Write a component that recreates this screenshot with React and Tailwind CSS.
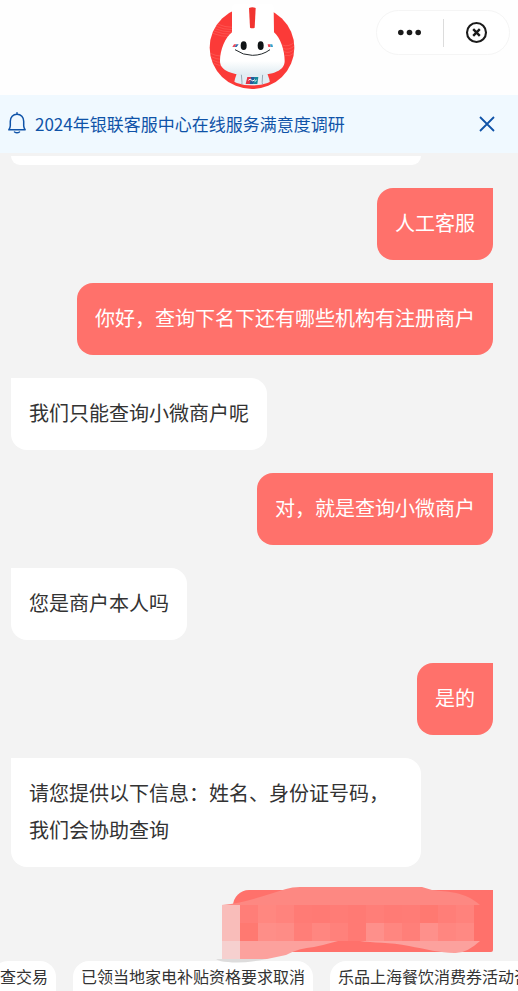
import React from "react";

const messages = [
    { id: 1, from: "user", text: "人工客服" },
    { id: 2, from: "user", text: "你好，查询下名下还有哪些机构有注册商户" },
    { id: 3, from: "agent", text: "我们只能查询小微商户呢" },
    { id: 4, from: "user", text: "对，就是查询小微商户" },
    { id: 5, from: "agent", text: "您是商户本人吗" },
    { id: 6, from: "user", text: "是的" },
    {
        id: 7,
        from: "agent",
        text: "请您提供以下信息：姓名、身份证号码，我们会协助查询",
    },
];

const quickReplies = [
    "查交易",
    "已领当地家电补贴资格要求取消",
    "乐品上海餐饮消费券活动咨询",
];

/* Colours of the mosaic blocks, left to right, 18px each */
const mosaicRows = [
    ["#f9bdba", "#ff7e78", "#ff8780", "#ff837d", "#ff7b75", "#ff7a74", "#ff7c76", "#ff7a74", "#ff7e78", "#ff7b75", "#ff7c76", "#ff7971", "#ff7e78", "#ff827c"],
    ["#f9bdba", "#ff7971", "#fe8e88", "#fe8c86", "#ff7e78", "#ff8680", "#ff817b", "#ff7a74", "#fe908b", "#ff8680", "#ff7f79", "#fe908b", "#ff8680", "#ff8983"],
];

function Mascot() {
    return (
        <svg
            className="h-[95px] w-[110px]"
            viewBox="0 0 330 285"
            role="img"
            aria-label="智能客服"
        >
            <defs>
                <linearGradient id="head" x1="0" y1="0" x2="0" y2="1">
                    <stop offset="0.8" stopColor="#ffffff" />
                    <stop offset="1" stopColor="#dfebf1" />
                </linearGradient>
                <clipPath id="disc">
                    <path d="M0 0H330V150H283A127 117 0 0 1 30 150H0Z" />
                </clipPath>
            </defs>
            <ellipse cx="156" cy="143" rx="127" ry="124" fill="#fb3a38" />
            <g fill="none" stroke="#ff8580" strokeWidth="1">
                <path d="M52 72Q75 82 98 82M48 79Q72 89 98 89M44 86Q70 96 98 96M41 93Q68 103 96 103M38 100Q64 110 90 110" />
                <path d="M31 160Q48 168 62 168M33 170Q50 178 65 178M36 180Q52 188 70 188M40 190Q58 198 78 198" />
                <path d="M246 135Q265 142 282 128M249 145Q266 152 283 138M252 155Q268 162 283 148M254 166Q270 171 282 159" />
            </g>
            <g clipPath="url(#disc)">
                <path
                    d="M112 215Q102 240 99 270H213Q211 240 200 215Z"
                    fill="#e2edf3"
                />
                <path
                    d="M124 222Q128 248 124 270M188 222Q184 248 190 270"
                    fill="none"
                    stroke="#96aab7"
                    strokeWidth="3"
                />
            </g>
            <path
                d="M96 24Q96 11 109 11H209Q221 11 221 24L222 97C240 112 254 150 254 183C254 212 220 226 157 226C94 226 60 212 60 183C60 150 76 112 96 97Z"
                fill="url(#head)"
            />
            <path d="M147 24Q157 20 167 24L164 83Q157 87 150 83Z" fill="#f13430" />
            <ellipse cx="131" cy="137" rx="9" ry="13" fill="#101416" />
            <ellipse cx="182" cy="137" rx="9" ry="13" fill="#101416" />
            <path
                d="M105 149Q129 166 157 166Q187 166 210 149"
                fill="none"
                stroke="#22282b"
                strokeWidth="3"
            />
            <path d="M102 133H109L104 141H97Z" fill="#ee4455" />
            <path d="M109 133H116L110 141H104Z" fill="#326eae" />
            <path d="M203 133H210L212 141H205Z" fill="#ee4455" />
            <path d="M210 133H217L219 141H212Z" fill="#32a2ce" />
            <path d="M142 231H154L150 252H137Z" fill="#e63345" />
            <path d="M153 231H165L161 252H149Z" fill="#245a9b" />
            <path d="M164 231H175L172 252H160Z" fill="#14899c" />
            <path
                d="M145 241Q151 234 154 240T165 239M164 245L170 240"
                fill="none"
                stroke="#ffffff"
                strokeWidth="3"
            />
        </svg>
    );
}

function Header() {
    return (
        <header className="grid shrink-0 grid-cols-[1fr_auto_1fr] bg-[#fefefe] pr-2">
            <div className="col-start-2">
                <Mascot />
            </div>
            <div className="mt-[10px] flex h-[45px] w-[134px] items-center justify-self-end rounded-full border border-[#f5f5f5] bg-white">
                <button
                    type="button"
                    aria-label="更多"
                    className="flex h-full flex-1 items-center justify-center"
                >
                    <svg className="h-6 w-6" viewBox="0 0 24 24" fill="#1b1b1b">
                        <circle cx="2.8" cy="11.5" r="2.8" />
                        <circle cx="11.5" cy="11.5" r="2.8" />
                        <circle cx="20.2" cy="11.5" r="2.8" />
                    </svg>
                </button>
                <span className="h-7 w-px bg-[#dcdcdc]" />
                <button
                    type="button"
                    aria-label="关闭"
                    className="flex h-full flex-1 items-center justify-center"
                >
                    <svg
                        className="h-6 w-6"
                        viewBox="0 0 24 24"
                        fill="none"
                        stroke="#1b1b1b"
                    >
                        <circle cx="12.5" cy="11.5" r="9.5" strokeWidth="2.1" />
                        <path d="M9.2 8.2L15.8 14.8M15.8 8.2L9.2 14.8" strokeWidth="2.4" />
                    </svg>
                </button>
            </div>
        </header>
    );
}

function Notice() {
    return (
        <div className="flex h-[58px] shrink-0 items-center bg-[#f0f9ff] pl-[7px] pr-[22px] text-[#0f53a8]">
            <svg
                className="h-6 w-5 shrink-0"
                viewBox="0 0 20 24"
                fill="none"
                stroke="currentColor"
                strokeWidth="1.5"
                strokeLinejoin="round"
                strokeLinecap="round"
            >
                <path d="M10 0.8V2.2M10 2.2C6 2.2 3.3 5.2 3.3 9.2V13.7Q3.3 15.4 1.8 17.8H18.2Q16.7 15.4 16.7 13.7V9.2C16.7 5.2 14 2.2 10 2.2Z" />
                <path d="M7.5 20Q10 21.7 12.5 20" />
            </svg>
            <a href="#survey" className="ml-2 flex-1 text-[17px] leading-6">
                2024年银联客服中心在线服务满意度调研
            </a>
            <button type="button" aria-label="关闭通知">
                <svg
                    className="h-[18px] w-[18px]"
                    viewBox="0 0 18 18"
                    fill="none"
                    stroke="currentColor"
                    strokeWidth="1.8"
                >
                    <path d="M2 2L16 16M16 2L2 16" />
                </svg>
            </button>
        </div>
    );
}

function Bubble({ from, text }) {
    return from === "user" ? (
        <li className="self-end rounded-2xl rounded-tr-none bg-[#ff716b] px-[18px] pt-4 pb-[19px] text-white">
            {text}
        </li>
    ) : (
        <li className="max-w-[410px] self-start rounded-2xl rounded-tl-none bg-white px-[18px] pt-4 pb-[19px] text-[#333333]">
            {text}
        </li>
    );
}

/* Message whose content has been brushed over with a mosaic */
function MaskedBubble() {
    return (
        <li className="relative h-[62px] w-[260px] self-end rounded-tl-2xl rounded-br-xs bg-[#ff716b]">
            <svg
                className="absolute -top-1 right-0 h-[78px] w-[277px]"
                viewBox="216 886 277 78"
                aria-hidden="true"
            >
                <path
                    d="M222 905C246 903 268 894 286 889Q292 887 300 887H422L432 890C448 892 464 891 480 905Z"
                    fill="#fd8882"
                />
                <path
                    d="M222 941H480Q466 954 454 953C441 953 425 949 409 946C390 942 372 943 360 941Q347 940 338 941L323 945L314 947Q299 948 286 955L267 959H222Z"
                    fill="#fca19d"
                />
                <path d="M216 959H267Q242 964 228 962Q220 962 216 959Z" fill="#dddcdc" />
                <rect x="222" y="941" width="18" height="18" fill="#f6d0cf" />
                {mosaicRows.map((row, y) =>
                    row.map((color, x) => (
                        <rect
                            key={`${x}-${y}`}
                            x={222 + x * 18}
                            y={905 + y * 18}
                            width="18"
                            height="18"
                            fill={color}
                        />
                    ))
                )}
            </svg>
        </li>
    );
}

export default function App() {
    return (
        <div
            lang="zh-CN"
            className="flex min-h-screen flex-col overflow-hidden bg-[#f3f3f3] font-['Noto_Sans_CJK_SC',sans-serif]"
        >
            <Header />
            <Notice />
            <main className="flex-1 pt-[3px] pr-[25px] pl-[11px]">
                <ul className="flex flex-col gap-[23px] text-[20px] leading-[37px]">
                    {/* tail of the previous reply, scrolled under the notice */}
                    <li
                        aria-hidden="true"
                        className="h-[9px] w-full max-w-[410px] rounded-b-2xl bg-white"
                    />
                    {messages.map((message) => (
                        <Bubble key={message.id} {...message} />
                    ))}
                    <MaskedBubble />
                </ul>
            </main>
            <footer className="flex shrink-0 gap-[17px] overflow-hidden pt-[9px]">
                {quickReplies.map((reply) => (
                    <button
                        key={reply}
                        type="button"
                        className="h-[30px] shrink-0 rounded-t-2xl bg-white px-2 text-[16px] leading-6 whitespace-nowrap text-[#333333] first:-ml-2"
                    >
                        {reply}
                    </button>
                ))}
            </footer>
        </div>
    );
}
